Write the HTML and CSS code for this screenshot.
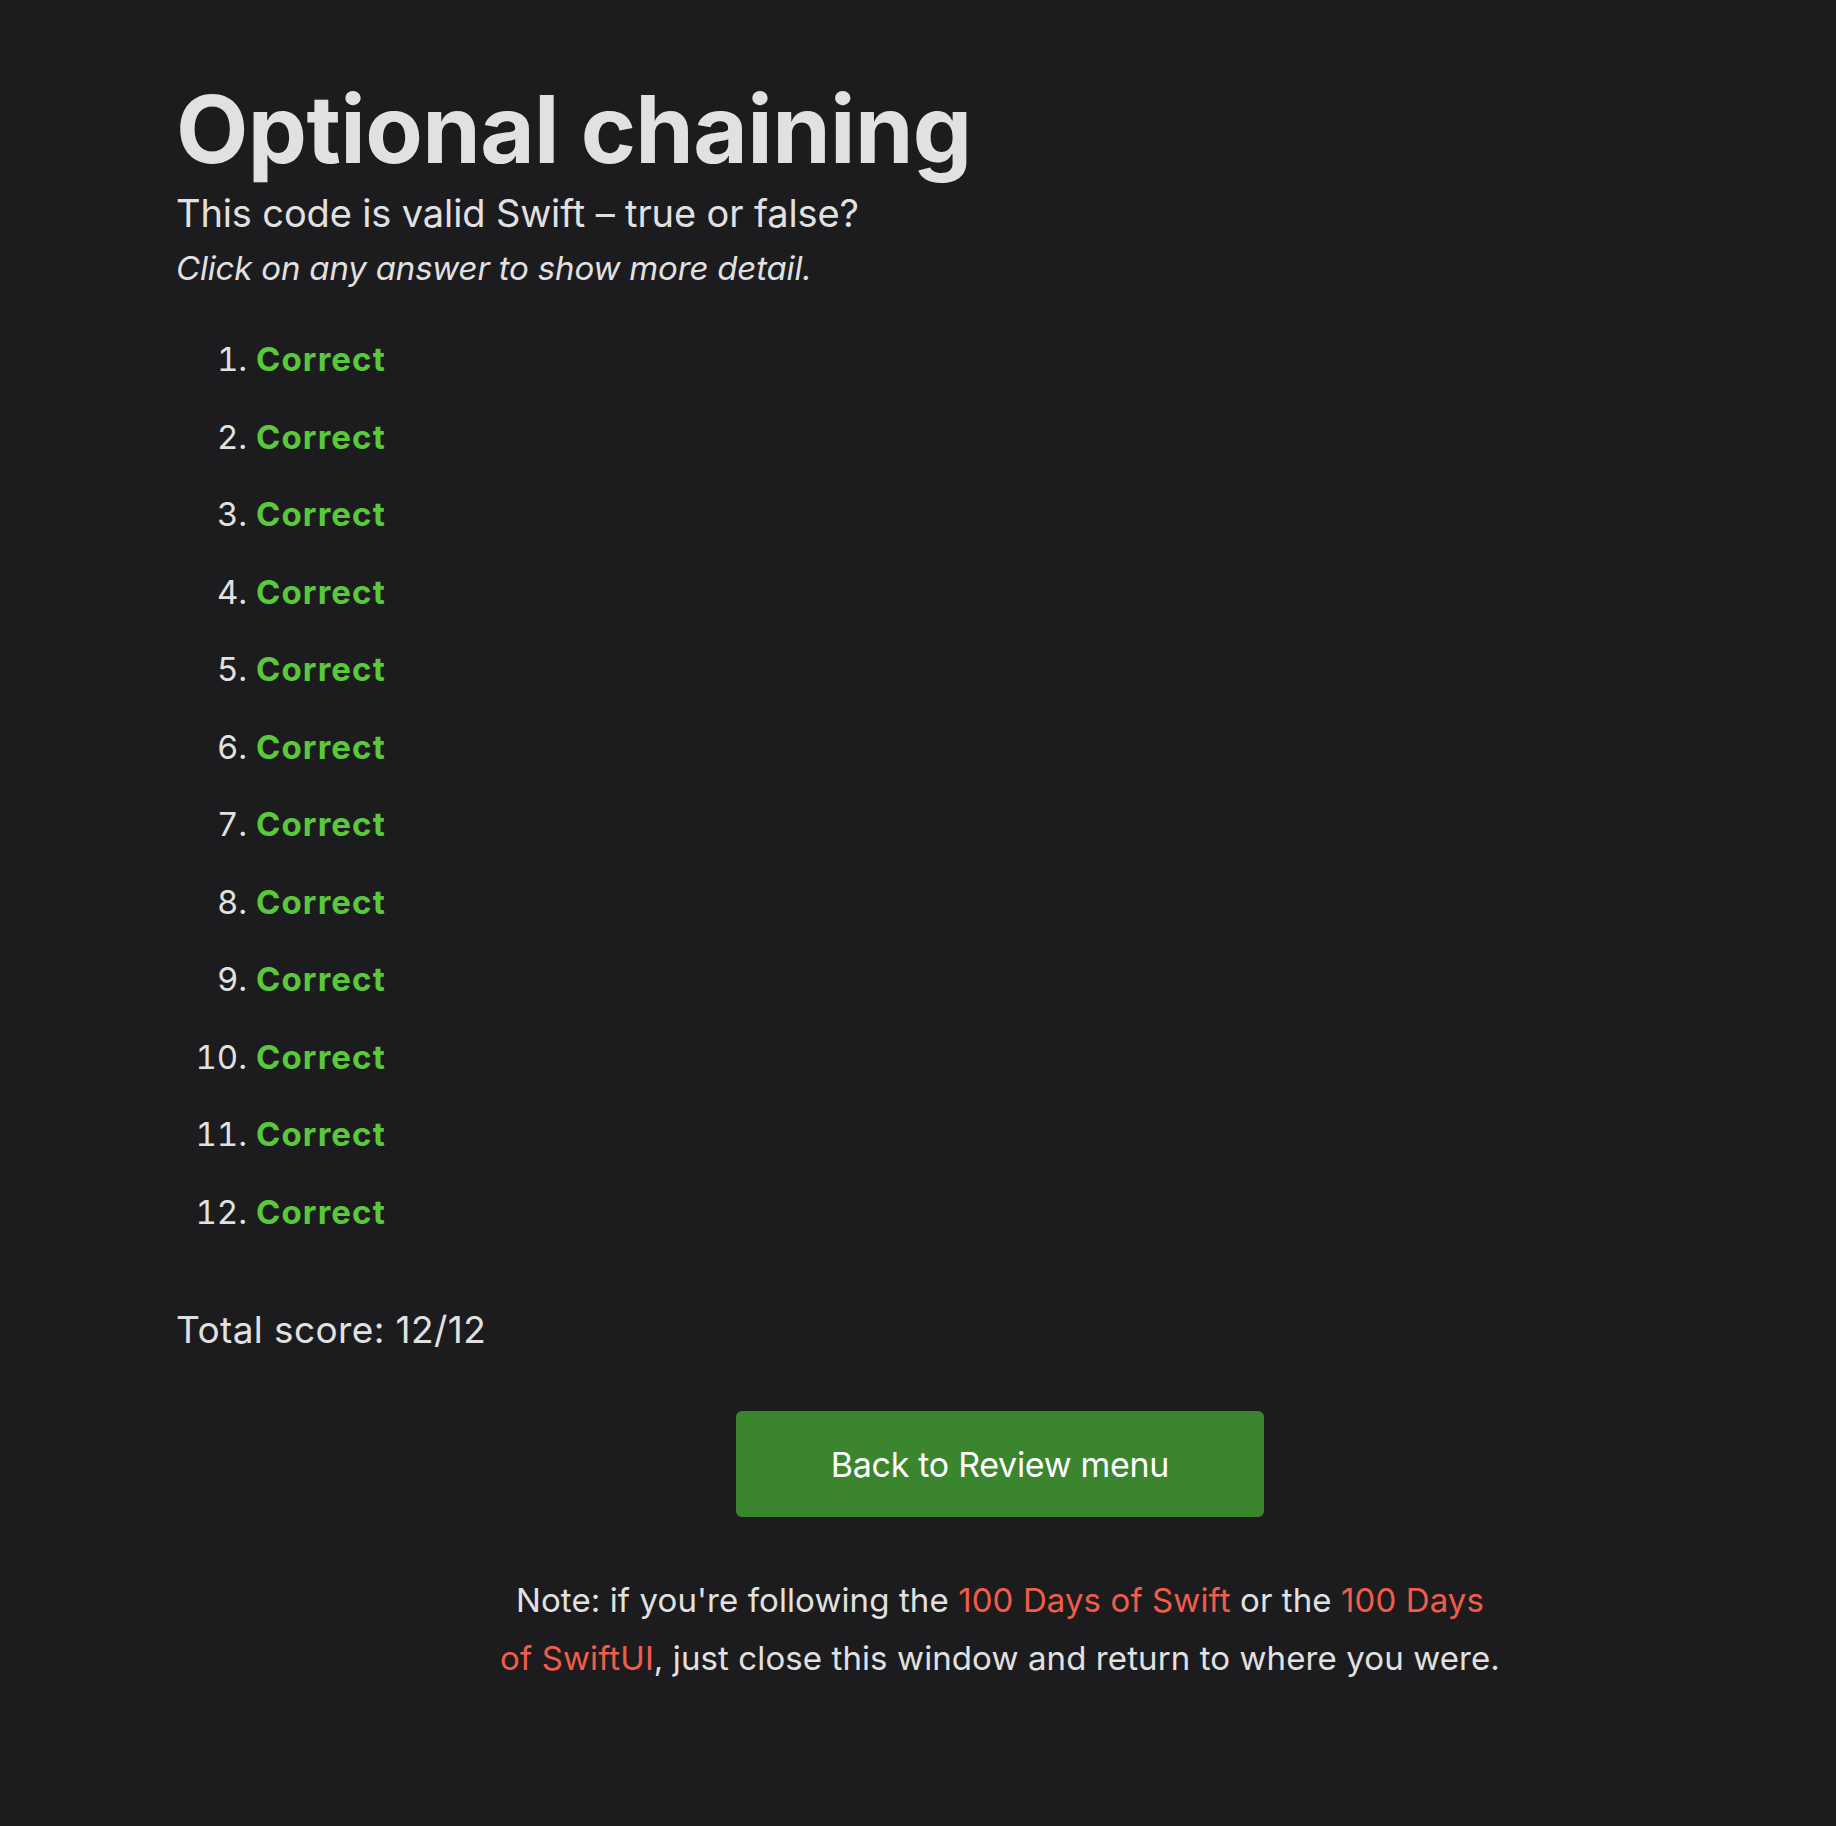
FILE: index.html
```html
<!DOCTYPE html>
<html lang="en">
<head>
<meta charset="utf-8">
<title>Optional chaining</title>
<link rel="stylesheet" href="styles.css">
</head>
<body>
<main class="page">
  <h1 class="title">Optional chaining</h1>
  <p class="subtitle">This code is valid Swift – true or false?</p>
  <p class="hint">Click on any answer to show more detail.</p>
  <ol class="answers">
    <li><span class="correct">Correct</span></li>
    <li><span class="correct">Correct</span></li>
    <li><span class="correct">Correct</span></li>
    <li><span class="correct">Correct</span></li>
    <li><span class="correct">Correct</span></li>
    <li><span class="correct">Correct</span></li>
    <li><span class="correct">Correct</span></li>
    <li><span class="correct">Correct</span></li>
    <li><span class="correct">Correct</span></li>
    <li><span class="correct">Correct</span></li>
    <li><span class="correct">Correct</span></li>
    <li><span class="correct">Correct</span></li>
  </ol>
  <p class="score">Total score: 12/12</p>
  <a class="back-button" href="#">Back to Review menu</a>
  <p class="note">Note: if you're following the <a href="#">100 Days of Swift</a> or the <a href="#">100 Days <span class="keep">of SwiftUI</span></a>, just close this window and return to where you were.</p>
</main>
</body>
</html>
```

FILE: styles.css
```css
html, body {
  margin: 0;
  padding: 0;
  background: #1c1c1e;
}

body {
  font-family: Inter, "Liberation Sans", sans-serif;
  color: #e1e1e1;
  min-height: 1826px;
}

.page {
  display: flex;
  flex-direction: column;
  padding: 77px 12px 0 176px;
}

.title {
  margin: 0;
  font-size: 94px;
  line-height: 104px;
  font-weight: 700;
  letter-spacing: -0.6px;
  color: #e1e1e1;
}

.subtitle {
  margin: 8px 0 0;
  font-size: 38px;
  line-height: 48px;
  letter-spacing: -0.13px;
}

.hint {
  margin: 9px 0 0;
  font-size: 33px;
  line-height: 44px;
  font-style: italic;
  letter-spacing: -0.18px;
}

.answers {
  margin: 31px 0 0;
  padding-left: 80px;
  font-size: 33px;
  line-height: 77.5px;
}

.answers li {
  color: #e1e1e1;
}

.correct {
  color: #5ac83b;
  font-weight: 700;
  letter-spacing: 1.1px;
}

.score {
  margin: 55px 0 0;
  font-size: 37px;
  line-height: 48px;
  letter-spacing: 0.4px;
}

.back-button {
  align-self: center;
  margin-top: 56.5px;
  width: 528px;
  height: 106px;
  box-sizing: border-box;
  padding-top: 2px;
  display: flex;
  align-items: center;
  justify-content: center;
  background: #3b852f;
  border-radius: 6px;
  color: #ffffff;
  text-decoration: none;
  font-size: 34px;
  letter-spacing: -0.3px;
}

.note {
  align-self: center;
  margin: 54px 0 0;
  max-width: 1000px;
  text-align: center;
  font-size: 33px;
  line-height: 58px;
  letter-spacing: 0.1px;
}

.note a {
  color: #f05d49;
  text-decoration: none;
}

.keep {
  white-space: nowrap;
}
```
